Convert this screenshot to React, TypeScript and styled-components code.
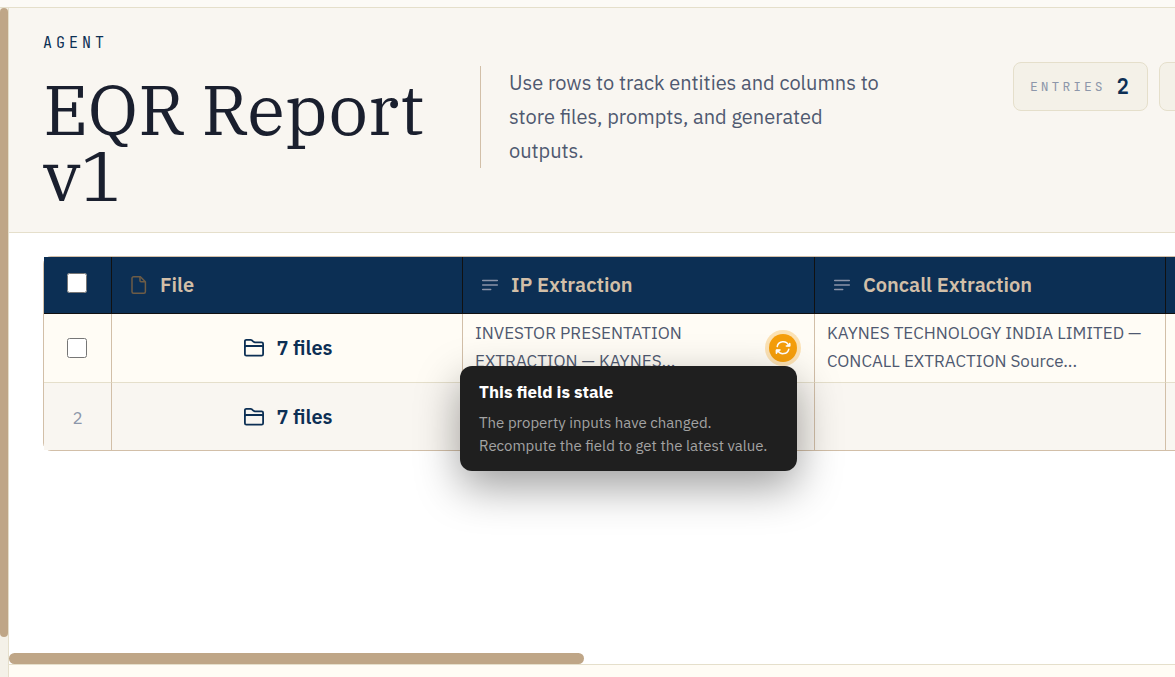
import React from "react";
import styled, { createGlobalStyle } from "styled-components";

const sans = `"IBM Plex Sans", Roboto, "Noto Sans", sans-serif`;
const serif = `"IBM Plex Serif", "DejaVu Serif Condensed", "DejaVu Serif", serif`;
const mono = `"JetBrains Mono", "Liberation Mono", monospace`;

const c = {
  navy: "#0c2f54",
  ink: "#1a1f2e",
  slate: "#4f5970",
  muted: "#8d97aa",
  tan: "#bfa687",
  sand: "#d2bfa8",
  line: "#e5dfcb",
  paper: "#f9f6f1",
  cream: "#fffcf5",
};

const GlobalStyle = createGlobalStyle`
  * { box-sizing: border-box; }
  body { margin: 0; background: #fff; font-family: ${sans}; color: ${c.ink}; overflow: hidden; }
`;

const Shell = styled.div`
  display: flex;
  flex-direction: column;
  height: 100vh;
`;

const TopStrip = styled.div`
  flex: none;
  height: 8px;
  background: #fcfaf6;
  border-bottom: 1px solid ${c.line};
`;

const Body = styled.div`
  display: flex;
  flex: 1;
  min-height: 0;
`;

const SideTrack = styled.div`
  flex: none;
  width: 9px;
  background: #f4f1e8;
  border-right: 1px solid ${c.line};
`;

const SideThumb = styled.div`
  width: 8px;
  height: 94%;
  border-radius: 6px;
  background: ${c.tan};
`;

const Main = styled.main`
  display: flex;
  flex-direction: column;
  flex: 1;
  min-width: 0;
`;

const Header = styled.header`
  display: flex;
  padding: 24px 34px;
  height: 225px;
  background: ${c.paper};
  border-bottom: 1px solid ${c.line};
  overflow: hidden;
`;

const TitleBlock = styled.div`
  flex: none;
  width: 405px;
`;

const Eyebrow = styled.p`
  margin: 0;
  font: 400 15px/22px ${mono};
  letter-spacing: 4px;
  color: ${c.navy};
`;

const Title = styled.h1`
  margin: 22px 0 0;
  font: 400 70px/66px ${serif};
  color: ${c.ink};
`;

const Description = styled.p`
  align-self: flex-start;
  flex: none;
  width: 410px;
  margin: 34px 0 0 32px;
  padding-left: 28px;
  border-left: 1px solid ${c.sand};
  font-size: 20px;
  line-height: 34px;
  color: ${c.slate};
`;

const Stats = styled.div`
  display: flex;
  flex: none;
  align-items: flex-start;
  gap: 11px;
  margin: 30px 0 0 123px;
`;

const Stat = styled.div`
  display: flex;
  align-items: center;
  gap: 11px;
  min-width: 135px;
  height: 49px;
  padding: 0 16px;
  border: 1px solid ${c.line};
  border-radius: 8px;
  background: #f4f1e8;
  font-family: ${mono};
`;

const StatLabel = styled.span`
  font-size: 13px;
  letter-spacing: 3px;
  color: ${c.muted};
`;

const StatValue = styled.strong`
  font-size: 21px;
  line-height: 28px;
  font-weight: 700;
  color: ${c.navy};
`;

const Canvas = styled.section`
  flex: 1;
  min-height: 0;
  padding: 23px 0 0 34px;
  overflow: hidden;
`;

const Table = styled.table`
  width: 1500px;
  table-layout: fixed;
  border-collapse: separate;
  border-spacing: 0;
  border: 1px solid ${c.sand};
  border-radius: 8px;
`;

const Col = styled.col<{ $w?: number }>`
  width: ${(p) => (p.$w ? `${p.$w}px` : "auto")};
`;

const Head = styled.th`
  height: 57px;
  padding: 0 17px 1px;
  background: ${c.navy};
  border-right: 1px solid #111;
  border-bottom: 1px solid #111;
  text-align: left;
  font-size: 20px;
  font-weight: 600;
  color: ${c.sand};
`;

const HeadLabel = styled.span`
  display: flex;
  align-items: center;
  gap: 11px;
`;

const Row = styled.tr<{ $alt?: boolean }>`
  background: ${(p) => (p.$alt ? c.paper : c.cream)};
`;

const Cell = styled.td<{ $last?: boolean }>`
  position: relative;
  height: ${(p) => (p.$last ? 67 : 69)}px;
  padding: 0 12px;
  border-right: 1px solid ${c.sand};
  border-bottom: ${(p) => (p.$last ? "none" : `1px solid ${c.line}`)};
`;

const RowNumber = styled(Cell)`
  text-align: center;
  padding-top: 2px;
  font-size: 17px;
  color: ${c.muted};
`;

const Check = styled.input`
  display: block;
  width: 20px;
  height: 20px;
  margin: 0 auto;
`;

const CheckCell = styled(Cell)`
  padding: 0 1px 0 0;
`;

const CheckHead = styled(Head)`
  padding: 0 1px 4px 0;
`;

const FileCell = styled(Cell)`
  padding: 0 11px 0 13px;
`;

const FilesButton = styled.button`
  display: flex;
  align-items: center;
  justify-content: center;
  gap: 11px;
  width: 100%;
  padding: 0;
  border: 0;
  background: none;
  font: 600 20px/28px ${sans};
  color: ${c.navy};
`;

const CellBody = styled.div`
  display: flex;
  align-items: center;
  gap: 12px;
`;

const CellText = styled.p`
  flex: 1;
  margin: 0;
  padding-bottom: 2px;
  font-size: 17px;
  line-height: 28px;
  color: ${c.slate};
`;

const StaleAnchor = styled.div`
  position: relative;
  flex: none;
  margin-right: 5px;
`;

const StaleButton = styled.button`
  display: flex;
  align-items: center;
  justify-content: center;
  width: 28px;
  height: 28px;
  padding: 0;
  border: 0;
  border-radius: 50%;
  background: #f59e0b;
  box-shadow: 0 0 0 4px rgba(245, 158, 11, 0.28);
  color: #fff;
`;

const Tooltip = styled.div`
  position: absolute;
  z-index: 2;
  top: calc(100% + 4px);
  right: 0;
  min-width: 337px;
  padding: 14px 19px;
  border-radius: 12px;
  background: #1f1f1f;
  box-shadow: 0 16px 44px rgba(0, 0, 0, 0.38);
  white-space: nowrap;
  font-size: 15px;
  line-height: 23px;
  color: #a3a3a3;

  strong {
    display: block;
    margin-bottom: 6px;
    font-size: 17px;
    line-height: 25px;
    font-weight: 700;
    color: #fff;
  }
`;

const BottomThumb = styled.div`
  flex: none;
  width: 49.3%;
  height: 11px;
  border-radius: 6px;
  background: ${c.tan};
`;

const Footer = styled.footer`
  flex: none;
  height: 13px;
  background: ${c.cream};
  border-top: 1px solid ${c.line};
`;

const FileIcon = () => (
  <svg width="20" height="20" viewBox="0 0 20 20" fill="none" stroke="#6d5c46" strokeWidth="1.5" strokeLinejoin="round">
    <path d="M4.500 1.800h6.900l5 5v10a1.500 1.500 0 0 1-1.500 1.500H4.500a1.500 1.500 0 0 1-1.500-1.500V3.300a1.500 1.500 0 0 1 1.500-1.500Z" />
    <path d="M11 1.800v3.900a1 1 0 0 0 1 1h4.200" />
  </svg>
);

const LinesIcon = () => (
  <svg width="20" height="20" viewBox="0 0 20 20" fill="none" stroke="#8b94a8" strokeWidth="1.5" strokeLinecap="round">
    <path d="M2.700 5.500h14.600M2.700 10h14.600M2.700 14.500h8" />
  </svg>
);

const FolderIcon = () => (
  <svg width="22" height="20" viewBox="0 0 22 20" fill="none" stroke={c.navy} strokeWidth="1.8" strokeLinejoin="round">
    <path d="M1.900 3.200a1.400 1.400 0 0 1 1.400-1.400h4.300c.5 0 .9.200 1.300.5l1.700 1.500c.4.300.8.500 1.300.5h6.700a1.500 1.500 0 0 1 1.500 1.500v10.400a1.500 1.500 0 0 1-1.500 1.500H3.400a1.500 1.500 0 0 1-1.500-1.500Z" />
    <path d="M1.900 9.200a1.200 1.200 0 0 1 1.200-1.200h15.800a1.200 1.200 0 0 1 1.200 1.200" />
  </svg>
);

const RefreshIcon = () => (
  <svg width="16" height="16" viewBox="0 0 16 16" fill="none" stroke="currentColor" strokeWidth="1.500" strokeLinecap="round" strokeLinejoin="round">
    <path d="M2.200 6.500a6 6 0 0 1 11.400-1M13.800 9.200a6 6 0 0 1-11 1.400" />
    <path d="M14.700 3.400v2.600h-3.400M1.500 13.200v-3.300h3.500" />
    <path d="M1.500 10h3.600l-3.600 3.300ZM14.600 6.100h-2.800l2.800-2.300Z" fill="currentColor" strokeWidth=".5" />
  </svg>
);

const columns = ["IP Extraction", "Concall Extraction", ""];

export default function App() {
  return (
    <Shell>
      <GlobalStyle />
      <TopStrip />
      <Body>
        <SideTrack>
          <SideThumb />
        </SideTrack>
        <Main>
          <Header>
            <TitleBlock>
              <Eyebrow>AGENT</Eyebrow>
              <Title>EQR Report v1</Title>
            </TitleBlock>
            <Description>Use rows to track entities and columns to store files, prompts, and generated outputs.</Description>
            <Stats>
              <Stat>
                <StatLabel>ENTRIES</StatLabel>
                <StatValue>2</StatValue>
              </Stat>
              <Stat />
            </Stats>
          </Header>
          <Canvas>
            <Table>
              <colgroup>
                <Col $w={68} />
                <Col $w={351} />
                <Col $w={352} />
                <Col $w={351} />
                <Col />
              </colgroup>
              <thead>
                <tr>
                  <CheckHead scope="col">
                    <Check type="checkbox" aria-label="Select all rows" />
                  </CheckHead>
                  <Head scope="col">
                    <HeadLabel>
                      <FileIcon />
                      File
                    </HeadLabel>
                  </Head>
                  {columns.map((name) => (
                    <Head scope="col" key={name}>
                      {name && (
                        <HeadLabel>
                          <LinesIcon />
                          {name}
                        </HeadLabel>
                      )}
                    </Head>
                  ))}
                </tr>
              </thead>
              <tbody>
                <Row>
                  <CheckCell>
                    <Check type="checkbox" aria-label="Select row 1" />
                  </CheckCell>
                  <FileCell>
                    <FilesButton type="button">
                      <FolderIcon />7 files
                    </FilesButton>
                  </FileCell>
                  <Cell>
                    <CellBody>
                      <CellText>INVESTOR PRESENTATION EXTRACTION — KAYNES...</CellText>
                      <StaleAnchor>
                        <StaleButton type="button" aria-label="Recompute field" aria-describedby="stale-tip">
                          <RefreshIcon />
                        </StaleButton>
                        <Tooltip role="tooltip" id="stale-tip">
                          <strong>This field is stale</strong>
                          The property inputs have changed.
                          <br />
                          Recompute the field to get the latest value.
                        </Tooltip>
                      </StaleAnchor>
                    </CellBody>
                  </Cell>
                  <Cell>
                    <CellText>KAYNES TECHNOLOGY INDIA LIMITED — CONCALL EXTRACTION Source...</CellText>
                  </Cell>
                  <Cell />
                </Row>
                <Row $alt>
                  <RowNumber $last>2</RowNumber>
                  <FileCell $last>
                    <FilesButton type="button">
                      <FolderIcon />7 files
                    </FilesButton>
                  </FileCell>
                  <Cell $last />
                  <Cell $last />
                  <Cell $last />
                </Row>
              </tbody>
            </Table>
          </Canvas>
          <BottomThumb />
          <Footer />
        </Main>
      </Body>
    </Shell>
  );
}
